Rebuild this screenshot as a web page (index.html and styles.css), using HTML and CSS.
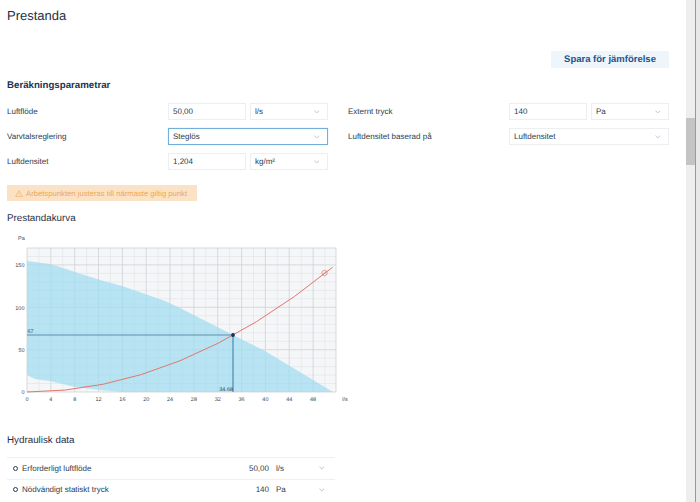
FILE: index.html
```html
<!DOCTYPE html>
<html lang="sv">
<head>
  <meta charset="UTF-8">
  <meta name="viewport" content="width=device-width, initial-scale=1.0">
  <title>Prestanda</title>
  <link rel="stylesheet" href="styles.css">
</head>
<body>
  <main class="page">
    <h1>Prestanda</h1>

    <div class="toolbar">
      <button class="save">Spara för jämförelse</button>
    </div>

    <h2>Beräkningsparametrar</h2>

    <div class="params">
      <div class="field">
        <label>Luftflöde</label>
        <div class="controls">
          <input class="num" type="text" value="50,00">
          <div class="select"><span>l/s</span><svg class="chev" viewBox="0 0 6 4"><path d="M0.5 0.8 3 3.2 5.5 0.8"/></svg></div>
        </div>
      </div>
      <div class="field">
        <label>Externt tryck</label>
        <div class="controls">
          <input class="num" type="text" value="140">
          <div class="select"><span>Pa</span><svg class="chev" viewBox="0 0 6 4"><path d="M0.5 0.8 3 3.2 5.5 0.8"/></svg></div>
        </div>
      </div>
      <div class="field">
        <label>Varvtalsreglering</label>
        <div class="controls">
          <div class="select wide focused"><span>Steglös</span><svg class="chev" viewBox="0 0 6 4"><path d="M0.5 0.8 3 3.2 5.5 0.8"/></svg></div>
        </div>
      </div>
      <div class="field">
        <label>Luftdensitet baserad på</label>
        <div class="controls">
          <div class="select wide"><span>Luftdensitet</span><svg class="chev" viewBox="0 0 6 4"><path d="M0.5 0.8 3 3.2 5.5 0.8"/></svg></div>
        </div>
      </div>
      <div class="field">
        <label>Luftdensitet</label>
        <div class="controls">
          <input class="num" type="text" value="1,204">
          <div class="select"><span>kg/m²</span><svg class="chev" viewBox="0 0 6 4"><path d="M0.5 0.8 3 3.2 5.5 0.8"/></svg></div>
        </div>
      </div>
    </div>

    <div class="warning">
      <svg class="warn-icon" viewBox="0 0 10 9"><path d="M5 0.7 9.4 8.4H0.6Z"/><path d="M5 3.4V5.8M5 6.7V7.3"/></svg>
      <span>Arbetspunkten justeras till närmaste giltig punkt</span>
    </div>

    <h3>Prestandakurva</h3>

    <svg class="chart" viewBox="7 232 345 176">
      <rect class="plot" x="27" y="248" width="309" height="144"/>
      <path class="grid-minor" d="M38.9 248V392M62.8 248V392M86.6 248V392M110.4 248V392M134.3 248V392M158.1 248V392M182 248V392M205.8 248V392M229.6 248V392M253.5 248V392M277.3 248V392M301.2 248V392M325 248V392M27 383.5H336M27 375.1H336M27 366.6H336M27 358.1H336M27 341.2H336M27 332.7H336M27 324.2H336M27 315.8H336M27 298.8H336M27 290.4H336M27 281.9H336M27 273.4H336M27 256.5H336"/>
      <path class="grid-major" d="M27 248V392M50.8 248V392M74.7 248V392M98.5 248V392M122.4 248V392M146.2 248V392M170 248V392M193.9 248V392M217.7 248V392M241.6 248V392M265.4 248V392M289.2 248V392M313.1 248V392M336 248V392M27 248H336M27 392H336M27 349.7H336M27 307.3H336M27 264.9H336"/>
      <path class="area" d="M27 261 50 264 60 267 75 272 100 280 122 286 145 294 165 301 180 308 233 335 265 351 333 392H122L100 390 75 387 50 381 35 379 27 375Z"/>
      <path class="op-h" d="M27 335H233"/>
      <path class="op-v" d="M233 335V392"/>
      <path class="system" d="M27 392Q179.9 392 332.7 267.2"/>
      <circle class="marker" cx="324.5" cy="273" r="2.7"/>
      <path class="marker" d="M322.6 274.9 326.4 271.1"/>
      <circle class="dot" cx="233" cy="335" r="1.9"/>

      <text class="tick" x="18" y="240">Pa</text>
      <text class="tick end" x="24.5" y="267">150</text>
      <text class="tick end" x="24.5" y="309.5">100</text>
      <text class="tick end" x="24.5" y="352">50</text>
      <text class="tick end" x="24.5" y="394">0</text>
      <text class="tick" x="27.5" y="333">67</text>
      <text class="tick end" x="233" y="391">34.68</text>

      <text class="tick mid" x="27" y="401">0</text>
      <text class="tick mid" x="50.8" y="401">4</text>
      <text class="tick mid" x="74.7" y="401">8</text>
      <text class="tick mid" x="98.5" y="401">12</text>
      <text class="tick mid" x="122.4" y="401">16</text>
      <text class="tick mid" x="146.2" y="401">20</text>
      <text class="tick mid" x="170" y="401">24</text>
      <text class="tick mid" x="193.9" y="401">28</text>
      <text class="tick mid" x="217.7" y="401">32</text>
      <text class="tick mid" x="241.6" y="401">36</text>
      <text class="tick mid" x="265.4" y="401">40</text>
      <text class="tick mid" x="289.2" y="401">44</text>
      <text class="tick mid" x="313.1" y="401">48</text>
      <text class="tick mid" x="345" y="401">l/s</text>
    </svg>

    <h3 class="data-title">Hydraulisk data</h3>

    <div class="data">
      <div class="data-row">
        <span class="bullet"></span>
        <span class="data-name">Erforderligt luftflöde</span>
        <span class="data-value">50,00</span>
        <span class="data-unit">l/s</span>
        <svg class="chev" viewBox="0 0 6 4"><path d="M0.5 0.8 3 3.2 5.5 0.8"/></svg>
      </div>
      <div class="data-row">
        <span class="bullet"></span>
        <span class="data-name">Nödvändigt statiskt tryck</span>
        <span class="data-value">140</span>
        <span class="data-unit">Pa</span>
        <svg class="chev" viewBox="0 0 6 4"><path d="M0.5 0.8 3 3.2 5.5 0.8"/></svg>
      </div>
    </div>
  </main>

  <div class="scrollbar"><div class="thumb"></div></div>
  <div class="window-edge"></div>
</body>
</html>
```

FILE: styles.css
```css
html, body {
  margin: 0;
  height: 502px;
  overflow: hidden;
}
body {
  display: flex;
  font-family: "Liberation Sans", Arial, sans-serif;
  color: #1f3044;
  background: #fff;
  text-rendering: geometricPrecision;
}
.page {
  box-sizing: border-box;
  width: 686px;
  height: 502px;
  padding: 8px 17px 0 7px;
  overflow: hidden;
}
h1 {
  margin: 0;
  font-size: 13px;
  line-height: 16px;
  font-weight: normal;
}
.toolbar {
  display: flex;
  justify-content: flex-end;
  margin-top: 27px;
}
.save {
  width: 118px;
  height: 17px;
  padding: 0;
  border: none;
  background: #eef6fc;
  color: #1d5488;
  font-family: inherit;
  font-size: 9.5px;
  font-weight: bold;
  text-rendering: geometricPrecision;
}
h2 {
  margin: 12px 0 0;
  font-size: 9.7px;
  line-height: 12px;
  font-weight: bold;
  color: #1c3553;
}
h3 {
  margin: 12px 0 0;
  font-size: 9.8px;
  line-height: 12px;
  font-weight: normal;
}
.params {
  display: grid;
  grid-template-columns: 321px 321px;
  column-gap: 20px;
  row-gap: 8px;
  margin-top: 11px;
}
.field {
  display: flex;
  align-items: center;
  height: 17px;
}
.field label {
  width: 161px;
  font-size: 8px;
  color: #2b3a4c;
}
.controls {
  display: flex;
  gap: 4px;
  width: 160px;
}
.num, .select {
  box-sizing: border-box;
  width: 78px;
  height: 17px;
  border: 1px solid #eceef1;
  background: #fff;
  color: #2b3a4c;
  font-family: inherit;
  font-size: 8px;
  text-rendering: geometricPrecision;
}
.num {
  padding: 0 4px;
  outline: none;
}
.select {
  display: flex;
  align-items: center;
  justify-content: space-between;
  padding: 0 8px 0 4px;
}
.wide {
  width: 100%;
}
.focused {
  border-color: #74aedb;
  box-shadow: 0 0 1px #a5cdea;
}
.chev {
  width: 5.5px;
  height: 3.7px;
  fill: none;
  stroke: #98a2ac;
  stroke-width: 0.7;
}
.warning {
  display: flex;
  align-items: center;
  gap: 3px;
  box-sizing: border-box;
  width: 190px;
  height: 16px;
  margin-top: 15px;
  padding-left: 8px;
  background: #fce2c4;
  color: #eaa85c;
  font-size: 7.7px;
}
.warn-icon {
  width: 8px;
  height: 7px;
  fill: none;
  stroke: #eaa85c;
  stroke-width: 0.7;
}
.chart {
  display: block;
  width: 345px;
  height: 176px;
  margin-top: 7px;
}
.plot {
  fill: #f5f6f8;
}
.grid-minor {
  fill: none;
  stroke: #e3e5e9;
  stroke-width: 0.7;
}
.grid-major {
  fill: none;
  stroke: #cfd2d7;
  stroke-width: 0.8;
}
.area {
  fill: #a2dcf0;
  opacity: 0.75;
}
.op-h {
  stroke: #5c8fae;
  stroke-width: 1;
}
.op-v {
  stroke: #2f7ba8;
  stroke-width: 1;
}
.system {
  fill: none;
  stroke: #e0776c;
  stroke-width: 1;
}
.marker {
  fill: none;
  stroke: #e0776c;
  stroke-width: 0.7;
}
.dot {
  fill: #12305a;
}
.tick {
  font-size: 5.5px;
  fill: #3a4654;
}
.end {
  text-anchor: end;
}
.mid {
  text-anchor: middle;
}
.data-title {
  margin-top: 27px;
}
.data {
  width: 328px;
  margin-top: 10px;
}
.data-row {
  display: flex;
  align-items: center;
  box-sizing: border-box;
  height: 21.5px;
  padding-left: 6px;
  border-top: 1px solid #eeeff1;
  font-size: 8px;
  color: #2b3a4c;
}
.bullet {
  box-sizing: border-box;
  width: 5px;
  height: 5px;
  border: 1px solid #1f3f5c;
  border-radius: 50%;
}
.data-name {
  width: 203px;
  margin-left: 4px;
}
.data-value {
  width: 44px;
  text-align: right;
}
.data-unit {
  width: 43px;
  margin-left: 7px;
}
.scrollbar {
  width: 9px;
  height: 502px;
  background: #eee;
}
.thumb {
  height: 47px;
  margin-top: 118px;
  background: #c4c4c4;
}
.window-edge {
  width: 5px;
  height: 502px;
  box-sizing: border-box;
  border-left: 1px solid #999;
  background: #e8e8e8;
}
```
